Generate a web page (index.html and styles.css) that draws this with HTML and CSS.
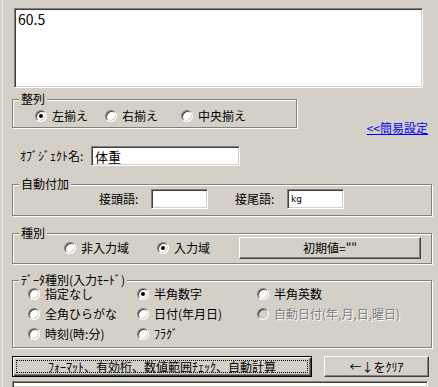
FILE: index.html
```html
<!DOCTYPE html>
<html lang="ja">
<head>
    <meta charset="UTF-8" />
    <title>オブジェクト設定</title>
    <link rel="stylesheet" href="styles.css">
</head>
<body>
    <div class="window">
        <div class="memo">60.5</div>

        <div class="align-row">
            <fieldset class="group group-align">
                <legend>整列</legend>
                <div class="radio-row align-radios">
                    <label class="radio w70"><span class="dot on"></span>左揃え</label>
                    <label class="radio w76"><span class="dot"></span>右揃え</label>
                    <label class="radio"><span class="dot"></span>中央揃え</label>
                </div>
            </fieldset>
            <a class="easy-link" href="#">&lt;&lt;簡易設定</a>
        </div>

        <div class="name-row">
            <span class="name-label">ｵﾌﾞｼﾞｪｸﾄ名:</span>
            <div class="textbox name-box">体重</div>
        </div>

        <fieldset class="group group-affix">
            <legend>自動付加</legend>
            <div class="affix-row">
                <span class="affix-label">接頭語:</span>
                <div class="textbox affix-box"></div>
                <span class="affix-label">接尾語:</span>
                <div class="textbox affix-box small-text">kg</div>
            </div>
        </fieldset>

        <fieldset class="group group-kind">
            <legend>種別</legend>
            <div class="kind-row">
                <label class="radio w93"><span class="dot"></span>非入力域</label>
                <label class="radio w82"><span class="dot on"></span>入力域</label>
                <button class="btn init-btn">初期値=""</button>
            </div>
        </fieldset>

        <fieldset class="group group-mode">
            <legend>ﾃﾞｰﾀ種別(入力ﾓｰﾄﾞ)</legend>
            <div class="mode-grid">
                <label class="radio"><span class="dot"></span>指定なし</label>
                <label class="radio"><span class="dot on"></span>半角数字</label>
                <label class="radio"><span class="dot"></span>半角英数</label>
                <label class="radio"><span class="dot"></span>全角ひらがな</label>
                <label class="radio"><span class="dot"></span>日付(年月日)</label>
                <label class="radio disabled"><span class="dot"></span>自動日付(年,月,日,曜日)</label>
                <label class="radio"><span class="dot"></span>時刻(時:分)</label>
                <label class="radio"><span class="dot"></span>ﾌﾗｸﾞ</label>
            </div>
        </fieldset>

        <div class="button-row">
            <button class="btn default-btn"><span class="focus">ﾌｫｰﾏｯﾄ、有効桁、数値範囲ﾁｪｯｸ、自動計算</span></button>
            <button class="btn clear-btn">←↓をｸﾘｱ</button>
        </div>

        <div class="textbox tip-box"></div>
    </div>
</body>
</html>
```

FILE: styles.css
```css
body {
    margin: 0;
    background-color: #d4d0c8;
    font-family: "Noto Sans CJK JP", "Liberation Sans", sans-serif;
    font-size: 12px;
    line-height: 14px;
    color: #000;
    overflow: hidden;
}

.window {
    box-sizing: border-box;
    width: 430px;
    height: 387px;
    margin-left: 2px;
    padding: 8px 0 0 9px;
    border-left: 1px solid #e8e6e1;
    display: flex;
    flex-direction: column;
}

.window > * {
    flex-shrink: 0;
}

/* sunken white boxes */
.textbox,
.memo {
    background-color: #fff;
    border: 1px solid;
    border-color: #808080 #fff #fff #808080;
    box-shadow: inset 1px 1px 0 #404040, inset -1px -1px 0 #d4d0c8;
    box-sizing: border-box;
}

.memo {
    margin-left: 2px;
    width: 409px;
    height: 80px;
    padding: 2px 3px;
    font-size: 14px;
    line-height: 16px;
}

/* etched group boxes */
.group {
    margin: 0;
    padding: 0;
    border: 1px solid #808080;
    box-shadow: inset 1px 1px 0 #fff, 1px 1px 0 #fff;
    min-inline-size: 0;
}

.group legend {
    margin-left: 6px;
    padding: 0 2px;
    line-height: 12px;
    background-color: #d4d0c8;
}

.align-row {
    margin-top: 5px;
    display: flex;
    align-items: flex-start;
}

.group-align {
    width: 285px;
    box-sizing: border-box;
}

.radio-row {
    display: flex;
    align-items: center;
    height: 16px;
}

.align-radios {
    margin-top: 3px;
    margin-bottom: 3px;
    padding-left: 22px;
}

.radio {
    display: flex;
    align-items: center;
    white-space: nowrap;
}

.w70 { width: 70px; }
.w76 { width: 76px; }
.w82 { width: 82px; }
.w93 { width: 93px; }

.dot {
    position: relative;
    width: 12px;
    height: 12px;
    margin-right: 5px;
    box-sizing: border-box;
    border-radius: 50%;
    background-color: #fff;
    border: 1px solid;
    border-color: #808080 #fff #fff #808080;
    box-shadow: inset 1px 1px 0 #404040, inset -1px -1px 0 #d4d0c8;
}

.dot.on::after {
    content: "";
    position: absolute;
    left: 3px;
    top: 3px;
    width: 4px;
    height: 4px;
    border-radius: 50%;
    background-color: #000;
}

.disabled {
    color: #808080;
    text-shadow: 1px 1px 0 #fff;
}

.disabled .dot {
    background-color: #d4d0c8;
}

.easy-link {
    margin: 28px 4px 0 auto;
    color: #0000ff;
    text-decoration: underline;
}

.name-row {
    margin-top: 11px;
    display: flex;
    align-items: center;
}

.name-label {
    width: 71px;
    padding-left: 8px;
}

.name-box {
    width: 149px;
    height: 20px;
    padding: 2px 3px;
    font-size: 13px;
    line-height: 15px;
}

.group-affix {
    margin-top: 12px;
}

.affix-row {
    display: flex;
    align-items: center;
    margin-top: -1px;
    margin-bottom: 6px;
    padding-left: 86px;
}

.affix-label {
    width: 52px;
}

.affix-box {
    width: 57px;
    height: 20px;
    margin-right: 27px;
    padding: 3px 3px;
}

.small-text {
    font-family: "DejaVu Sans", sans-serif;
    font-size: 9px;
    line-height: 12px;
}

.group-kind {
    margin-top: 11px;
}

.kind-row {
    display: flex;
    align-items: center;
    margin-top: -2px;
    margin-bottom: 4px;
    padding-left: 51px;
}

/* raised buttons */
.btn {
    font-family: inherit;
    font-size: 12px;
    line-height: 14px;
    color: #000;
    padding: 0;
    background-color: #d4d0c8;
    border: 1px solid;
    border-color: #fff #404040 #404040 #fff;
    box-shadow: inset -1px -1px 0 #808080;
    box-sizing: border-box;
}

.init-btn {
    width: 182px;
    height: 22px;
}

.group-mode {
    margin-top: 10px;
}

.mode-grid {
    display: grid;
    grid-template-columns: 109px 120px 1fr;
    grid-auto-rows: 20px;
    align-items: center;
    margin-top: -2px;
    margin-bottom: 3px;
    padding-left: 15px;
}

.button-row {
    margin-top: 8px;
    display: flex;
    gap: 12px;
}

.default-btn {
    width: 300px;
    height: 21px;
    border: 1px solid #000;
    box-shadow: inset 1px 1px 0 #fff, inset -1px -1px 0 #404040, inset -2px -2px 0 #808080;
    padding: 3px;
    display: flex;
}

.focus {
    flex: 1;
    border: 1px dotted #000;
    line-height: 11px;
}

.clear-btn {
    width: 105px;
    height: 21px;
}

.tip-box {
    flex: 1 0 0;
    margin-top: 4px;
    width: 416px;
    border-bottom: none;
    background-color: #ffffef;
}
```
